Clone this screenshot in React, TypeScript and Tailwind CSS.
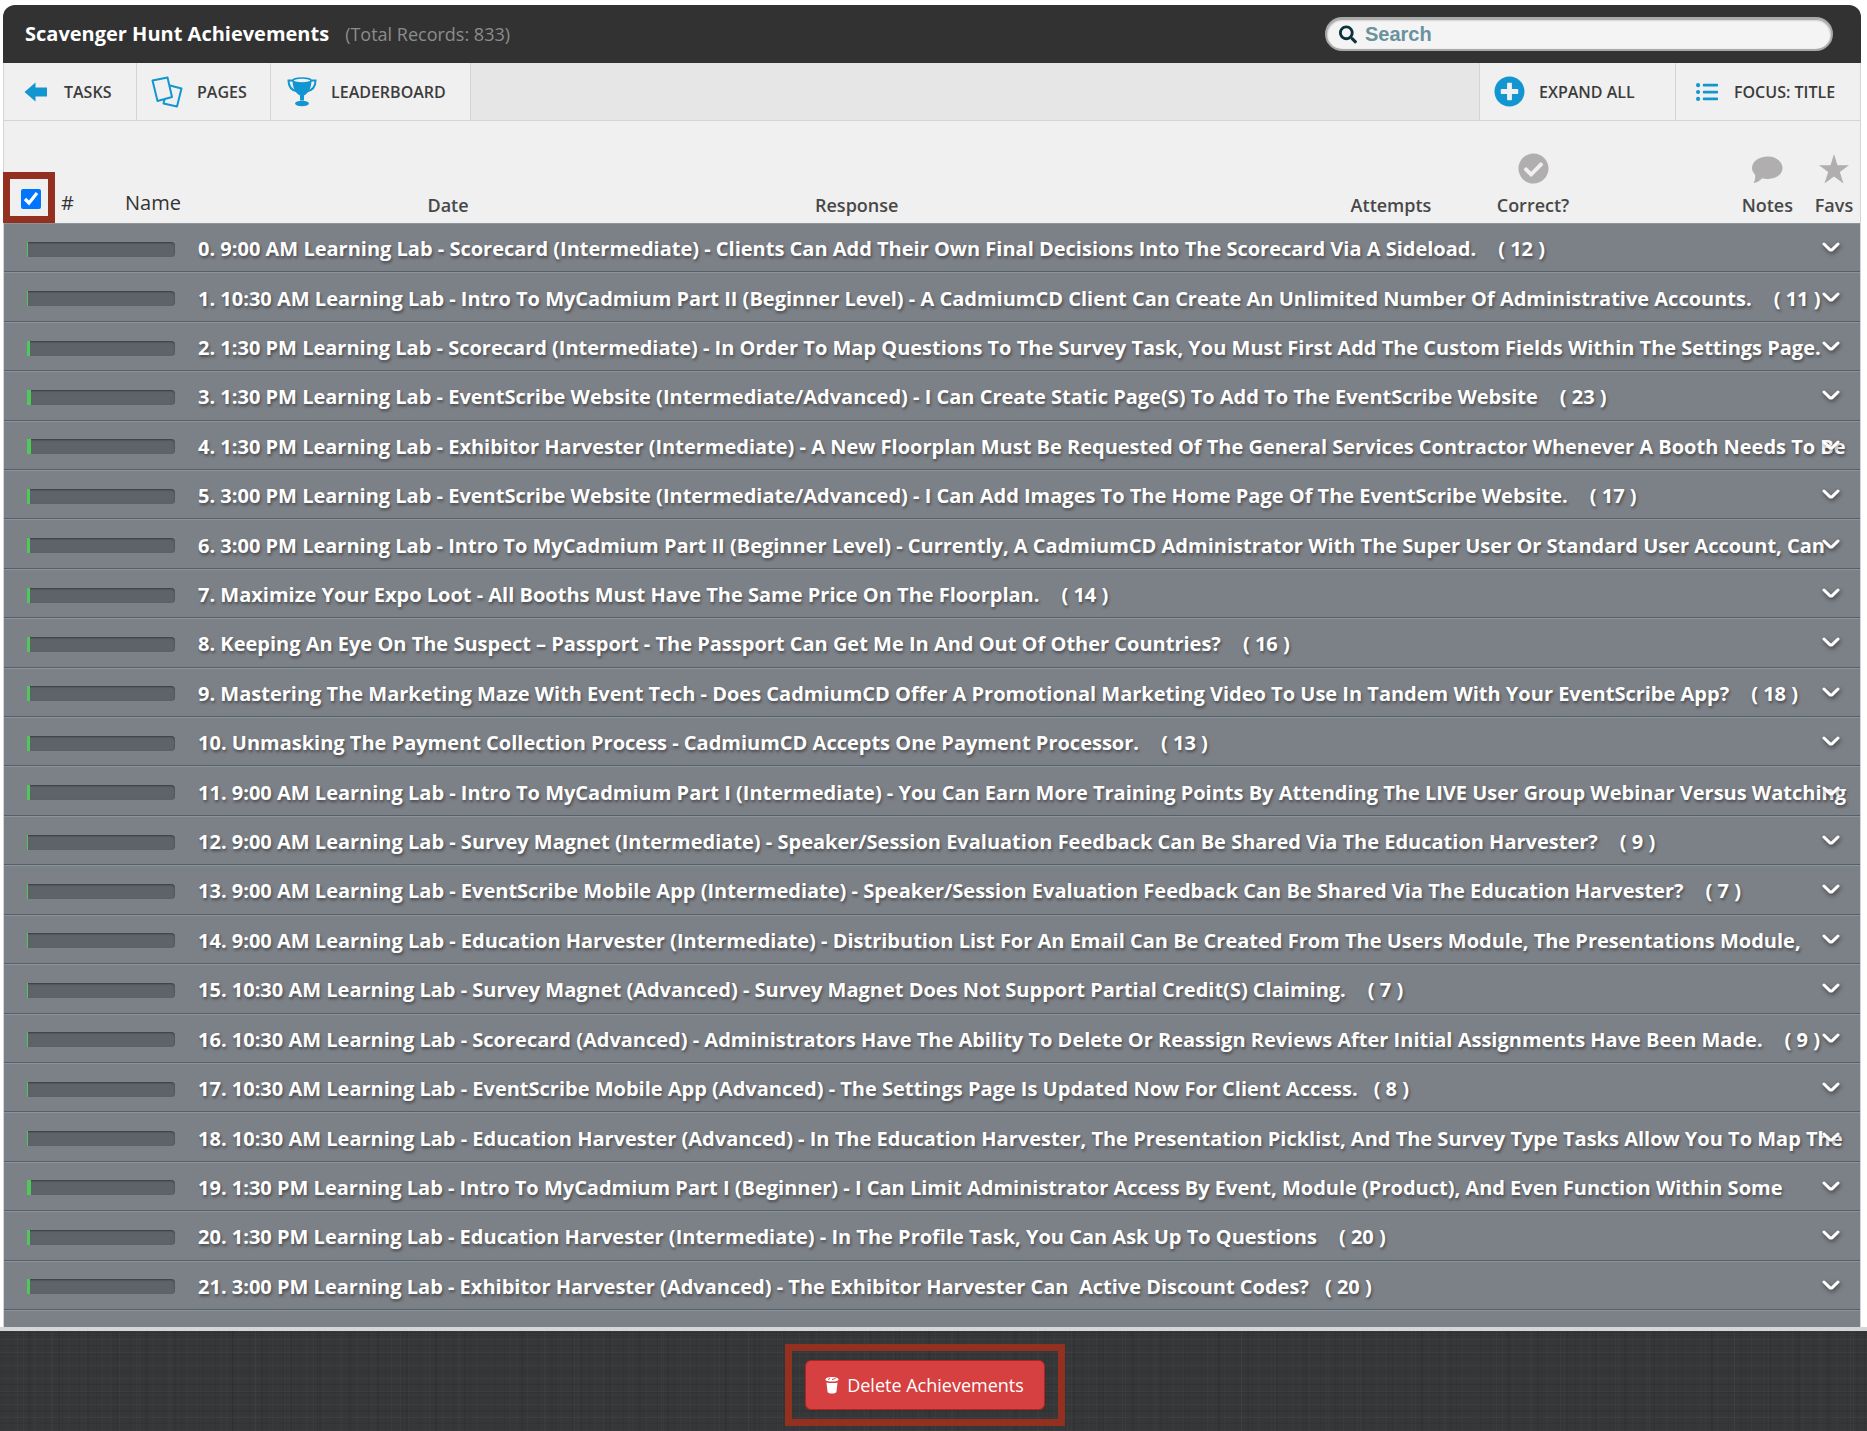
import { useState } from 'react';
import { FaCheckCircle, FaListUl, FaPlusCircle, FaSearch } from 'react-icons/fa';

type Achievement = {
  title: string;
  count?: number;
  edited?: boolean;
  progress: number;
};

const TOTAL_RECORDS = 833;

const achievements: Achievement[] = [
  { title: '9:00 AM Learning Lab - Scorecard (Intermediate) - Clients Can Add Their Own Final Decisions Into The Scorecard Via A Sideload.', count: 12, progress: 1 },
  { title: '10:30 AM Learning Lab - Intro To MyCadmium Part II (Beginner Level) - A CadmiumCD Client Can Create An Unlimited Number Of Administrative Accounts.', count: 11, progress: 1 },
  { title: '1:30 PM Learning Lab - Scorecard (Intermediate) - In Order To Map Questions To The Survey Task, You Must First Add The Custom Fields Within The Settings Page.', progress: 2 },
  { title: '1:30 PM Learning Lab - EventScribe Website (Intermediate/Advanced) - I Can Create Static Page(S) To Add To The EventScribe Website', count: 23, progress: 3 },
  { title: '1:30 PM Learning Lab - Exhibitor Harvester (Intermediate) - A New Floorplan Must Be Requested Of The General Services Contractor Whenever A Booth Needs To Be', progress: 3 },
  { title: '3:00 PM Learning Lab - EventScribe Website (Intermediate/Advanced) - I Can Add Images To The Home Page Of The EventScribe Website.', count: 17, progress: 2 },
  { title: '3:00 PM Learning Lab - Intro To MyCadmium Part II (Beginner Level) - Currently, A CadmiumCD Administrator With The Super User Or Standard User Account, Can', progress: 2 },
  { title: 'Maximize Your Expo Loot - All Booths Must Have The Same Price On The Floorplan.', count: 14, progress: 2 },
  { title: 'Keeping An Eye On The Suspect – Passport - The Passport Can Get Me In And Out Of Other Countries?', count: 16, progress: 2 },
  { title: 'Mastering The Marketing Maze With Event Tech - Does CadmiumCD Offer A Promotional Marketing Video To Use In Tandem With Your EventScribe App?', count: 18, progress: 2 },
  { title: 'Unmasking The Payment Collection Process - CadmiumCD Accepts One Payment Processor.', count: 13, progress: 2 },
  { title: '9:00 AM Learning Lab - Intro To MyCadmium Part I (Intermediate) - You Can Earn More Training Points By Attending The LIVE User Group Webinar Versus Watching', progress: 2 },
  { title: '9:00 AM Learning Lab - Survey Magnet (Intermediate) - Speaker/Session Evaluation Feedback Can Be Shared Via The Education Harvester?', count: 9, progress: 1 },
  { title: '9:00 AM Learning Lab - EventScribe Mobile App (Intermediate) - Speaker/Session Evaluation Feedback Can Be Shared Via The Education Harvester?', count: 7, progress: 1 },
  { title: '9:00 AM Learning Lab - Education Harvester (Intermediate) - Distribution List For An Email Can Be Created From The Users Module, The Presentations Module,', progress: 1 },
  { title: '10:30 AM Learning Lab - Survey Magnet (Advanced) - Survey Magnet Does Not Support Partial Credit(S) Claiming.', count: 7, progress: 1 },
  { title: '10:30 AM Learning Lab - Scorecard (Advanced) - Administrators Have The Ability To Delete Or Reassign Reviews After Initial Assignments Have Been Made.', count: 9, progress: 1 },
  { title: '10:30 AM Learning Lab - EventScribe Mobile App (Advanced) - The Settings Page Is Updated Now For Client Access.', count: 8, edited: true, progress: 1 },
  { title: '10:30 AM Learning Lab - Education Harvester (Advanced) - In The Education Harvester, The Presentation Picklist, And The Survey Type Tasks Allow You To Map The', progress: 1 },
  { title: '1:30 PM Learning Lab - Intro To MyCadmium Part I (Beginner) - I Can Limit Administrator Access By Event, Module (Product), And Even Function Within Some', progress: 3 },
  { title: '1:30 PM Learning Lab - Education Harvester (Intermediate) - In The Profile Task, You Can Ask Up To Questions', count: 20, progress: 2 },
  { title: '3:00 PM Learning Lab - Exhibitor Harvester (Advanced) - The Exhibitor Harvester Can\u00a0 Active Discount Codes?', count: 20, edited: true, progress: 2 },
];

function ArrowIcon() {
  return (
    <svg width="24" height="20" viewBox="0 0 24 20" fill="#1296d1" aria-hidden="true">
      <path d="M0.500 10 11.500 0.500V5.500H23V14.500H11.500V19.500Z" />
    </svg>
  );
}

function PagesIcon() {
  return (
    <svg width="32" height="32" viewBox="0 0 32 32" fill="none" stroke="#1296d1" strokeWidth="2" strokeLinejoin="round" aria-hidden="true">
      <path d="M1.500 4.500 16.500 1.500 21 21 6.500 25Z" />
      <path d="M19 9.500 30.500 12.500 26 30.500 12.500 27.500 13.500 23.500" />
    </svg>
  );
}

function TrophyIcon() {
  return (
    <svg width="30" height="30" viewBox="0 0 30 30" fill="#1296d1" aria-hidden="true">
      <path d="M7 3.500H1.500C1.500 9 4.500 13.500 10.500 14.500M23 3.500H28.500C28.500 9 25.500 13.500 19.500 14.500" fill="none" stroke="#1296d1" strokeWidth="2" />
      <path d="M5.500 3C5.500 11 8.500 16 13 18.500V23.500H17V18.500C21.500 16 24.500 11 24.500 3Z" />
      <ellipse cx="15" cy="3.500" rx="9" ry="2.500" fill="#f0f0f0" stroke="#1296d1" strokeWidth="1.500" />
      <ellipse cx="15" cy="26.500" rx="7" ry="2.800" />
    </svg>
  );
}

function NotesIcon() {
  return (
    <svg width="32" height="28" viewBox="0 0 32 28" fill="#b0aeae" aria-hidden="true">
      <path d="M16.500 0.500C25 0.500 31.500 5.500 31.500 12S25 23 16.500 23C14.500 23 12.700 22.800 11 22.200C9 25 6 26.500 2.500 27C4 24.500 4.500 21.500 4 18.500C2 16.500 1 14.500 1 12C1 5.500 8 0.500 16.500 0.500Z" />
    </svg>
  );
}

function StarIcon() {
  return (
    <svg width="30" height="30" viewBox="0 0 30 30" fill="#b0aeae" aria-hidden="true">
      <path d="M15 0 18.500 11.300H30L20.800 18 24.500 29.500 15 22.500 5.500 29.500 9.200 18 0 11.300H11.500Z" />
    </svg>
  );
}

function TrashIcon() {
  return (
    <svg width="14" height="18" viewBox="0 0 14 18" fill="white" aria-hidden="true">
      <path d="M0.500 3.500C0.500 2 3 1 7 1S13.500 2 13.500 3.500C13.500 5 11 5.500 7 5.500S0.500 5 0.500 3.500Z" />
      <path d="M3 3.500 5 2.500M7 3.500 10.500 2.500" stroke="#d64040" strokeWidth="1" />
      <path d="M1.500 6.500C4 7.300 10 7.300 12.500 6.500L11.500 15.500C11.300 17 9.500 17.500 7 17.500S2.700 17 2.500 15.500Z" />
    </svg>
  );
}

function Chevron() {
  return (
    <svg className="drop-shadow-[1px_2px_2px_rgba(0,0,0,0.5)]" width="18" height="11" viewBox="0 0 18 11" fill="none" stroke="white" strokeWidth="3" strokeLinecap="round" aria-hidden="true">
      <path d="M2 2 7.500 7.300Q9 8.700 10.500 7.300L16 2" />
    </svg>
  );
}

function Toolbar({ expanded, onExpand }: { expanded: boolean; onExpand: () => void }) {
  return (
    <nav className="flex h-[58px] justify-between border-b border-[#d4d4d4] bg-[#e6e6e6] text-base font-semibold text-[#3c3c3c]">
      <div className="flex">
        <a href="#tasks" className="flex w-[133px] items-center gap-4 border-r border-[#d4d4d4] bg-[#f0f0f0] pl-5">
          <ArrowIcon />TASKS
        </a>
        <a href="#pages" className="flex w-[134px] items-center gap-[14px] border-r border-[#d4d4d4] bg-[#f0f0f0] pl-[14px]">
          <PagesIcon />PAGES
        </a>
        <a href="#leaderboard" className="flex w-[200px] items-center gap-[14px] border-r border-[#d4d4d4] bg-[#f0f0f0] pl-4">
          <TrophyIcon />LEADERBOARD
        </a>
      </div>
      <div className="flex">
        <button type="button" aria-pressed={expanded} onClick={onExpand} className="flex w-[196px] items-center gap-[14px] border-l border-[#d4d4d4] bg-[#f0f0f0] pl-[14px]">
          <FaPlusCircle size={31} color="#1296d1" />EXPAND ALL
        </button>
        <button type="button" className="flex w-[185px] items-center gap-4 whitespace-nowrap border-l border-[#d4d4d4] bg-[#f0f0f0] pl-5">
          <FaListUl size={22} color="#1296d1" />FOCUS: TITLE
        </button>
      </div>
    </nav>
  );
}

function AchievementRow({ item, index }: { item: Achievement; index: number }) {
  return (
    <tr className="bg-[#7c8187] text-xl font-bold text-white *:border-b *:border-t *:border-b-[#566069] *:border-t-[#8b939b] *:pt-[3px]">
      <td colSpan={3} className="pl-[23px]">
        <div className="h-[15px] w-[148px] overflow-hidden rounded-r-sm bg-[#5d6368] shadow-[inset_0_1px_2px_rgba(0,0,0,0.4)]">
          <div className="h-full bg-[#4fc85a]" style={{ width: `${item.progress}%` }} />
        </div>
      </td>
      <td colSpan={6} className="relative">
        <div className="overflow-hidden whitespace-nowrap leading-8 [text-shadow:1px_2px_3px_rgba(0,0,0,0.45)]">
          {index}. {item.title}
          {item.count !== undefined && <span className={item.edited ? 'pl-4' : 'pl-[22px]'}>( {item.count} )</span>}
        </div>
        <button type="button" aria-label={`Expand question ${index}`} className="absolute inset-y-0 right-5 flex items-center">
          <Chevron />
        </button>
      </td>
    </tr>
  );
}

export default function App() {
  const [allSelected, setAllSelected] = useState(true);
  const [expanded, setExpanded] = useState(false);

  return (
    <div className="flex min-h-screen flex-col bg-white font-['Open_Sans',sans-serif]">
      <main className="ml-[3px] mr-[6px] mt-[5px]">
        <header className="flex h-[58px] items-center justify-between rounded-t-xl bg-[#323232] pl-[22px] pr-7">
          <div className="flex items-center gap-4">
            <h1 className="text-xl font-bold text-white">Scavenger Hunt Achievements</h1>
            <span className="text-lg text-[#8c8c8c]">(Total Records: {TOTAL_RECORDS})</span>
          </div>
          <label className="flex h-[34px] w-[508px] items-center gap-2 rounded-full border-2 border-[#a8a8a8] bg-[#f4f4f4] pl-3 shadow-[inset_0_1px_2px_rgba(0,0,0,0.4)]">
            <FaSearch size={19} color="#0c3240" />
            <input
              type="search"
              aria-label="Search"
              placeholder="Search"
              className="w-full bg-transparent font-['Liberation_Sans',sans-serif] text-xl font-bold outline-none placeholder:text-[#6a929d]"
            />
          </label>
        </header>
        <div className="border-x border-[#d4d4d4]">
          <Toolbar expanded={expanded} onExpand={() => setExpanded(!expanded)} />
          <table className="h-[1189px] w-full table-fixed border-separate border-spacing-0">
            <colgroup>
              <col className="w-[51px]" />
              <col className="w-[25px]" />
              <col className="w-[118px]" />
              <col className="w-[500px]" />
              <col />
              <col className="w-[142px]" />
              <col className="w-[142px]" />
              <col className="w-[204px]" />
              <col className="w-[52px]" />
            </colgroup>
            <thead className="bg-[#f0f0f0] text-lg leading-6 text-[#484848]">
              <tr className="h-[102px] align-bottom *:pb-[6px] *:font-semibold">
                <th className="!pb-0">
                  <label className="-ml-px flex h-[51px] w-[52px] items-end justify-end border-[7px] border-[#93301f] p-[7px]">
                    <input type="checkbox" aria-label="Select all" checked={allSelected} onChange={() => setAllSelected(!allSelected)} className="size-5 shrink-0 accent-[#0075ff]" />
                  </label>
                </th>
                <th className="text-xl !font-normal text-[#333]">#</th>
                <th className="pl-7 text-xl !font-normal text-[#333]">Name</th>
                <th>Date</th>
                <th className="pl-[117px] text-left">Response</th>
                <th>Attempts</th>
                <th>
                  <div className="flex flex-col items-center gap-[9px]">
                    <FaCheckCircle size={31} color="#b0aeae" />Correct?
                  </div>
                </th>
                <th className="pr-[15px] text-right">
                  <div className="inline-flex flex-col items-center gap-[9px] align-bottom">
                    <NotesIcon />Notes
                  </div>
                </th>
                <th>
                  <div className="flex flex-col items-center gap-[9px]">
                    <StarIcon />Favs
                  </div>
                </th>
              </tr>
            </thead>
            <tbody>
              {achievements.map((item, i) => (
                <AchievementRow key={i} item={item} index={i} />
              ))}
            </tbody>
          </table>
          <div className="h-[17px] border-t border-[#8b939b] bg-[#7c8187]" />
        </div>
      </main>
      <footer className="flex flex-1 items-center justify-center border-t-4 border-[#d5d6d7] bg-[#363739] bg-[repeating-linear-gradient(90deg,rgba(255,255,255,0.02)_0_1px,transparent_1px_11px,rgba(0,0,0,0.06)_11px_12px,transparent_12px_17px),repeating-linear-gradient(90deg,rgba(0,0,0,0.06)_0_2px,transparent_2px_23px,rgba(255,255,255,0.02)_23px_24px,transparent_24px_29px),repeating-linear-gradient(0deg,rgba(255,255,255,0.03)_0_1px,transparent_1px_7px,rgba(0,0,0,0.08)_7px_8px,transparent_8px_13px),repeating-linear-gradient(0deg,rgba(0,0,0,0.08)_0_1px,transparent_1px_19px)] pr-[18px] pt-2">
        <div className="border-[7px] border-[#93301f] px-[13px] py-[9px]">
          <button type="button" className="flex h-[50px] w-[240px] items-center justify-center gap-2 rounded-md border border-[#b52020] bg-[#d64040] text-lg text-white">
            <TrashIcon />Delete Achievements
          </button>
        </div>
      </footer>
    </div>
  );
}
